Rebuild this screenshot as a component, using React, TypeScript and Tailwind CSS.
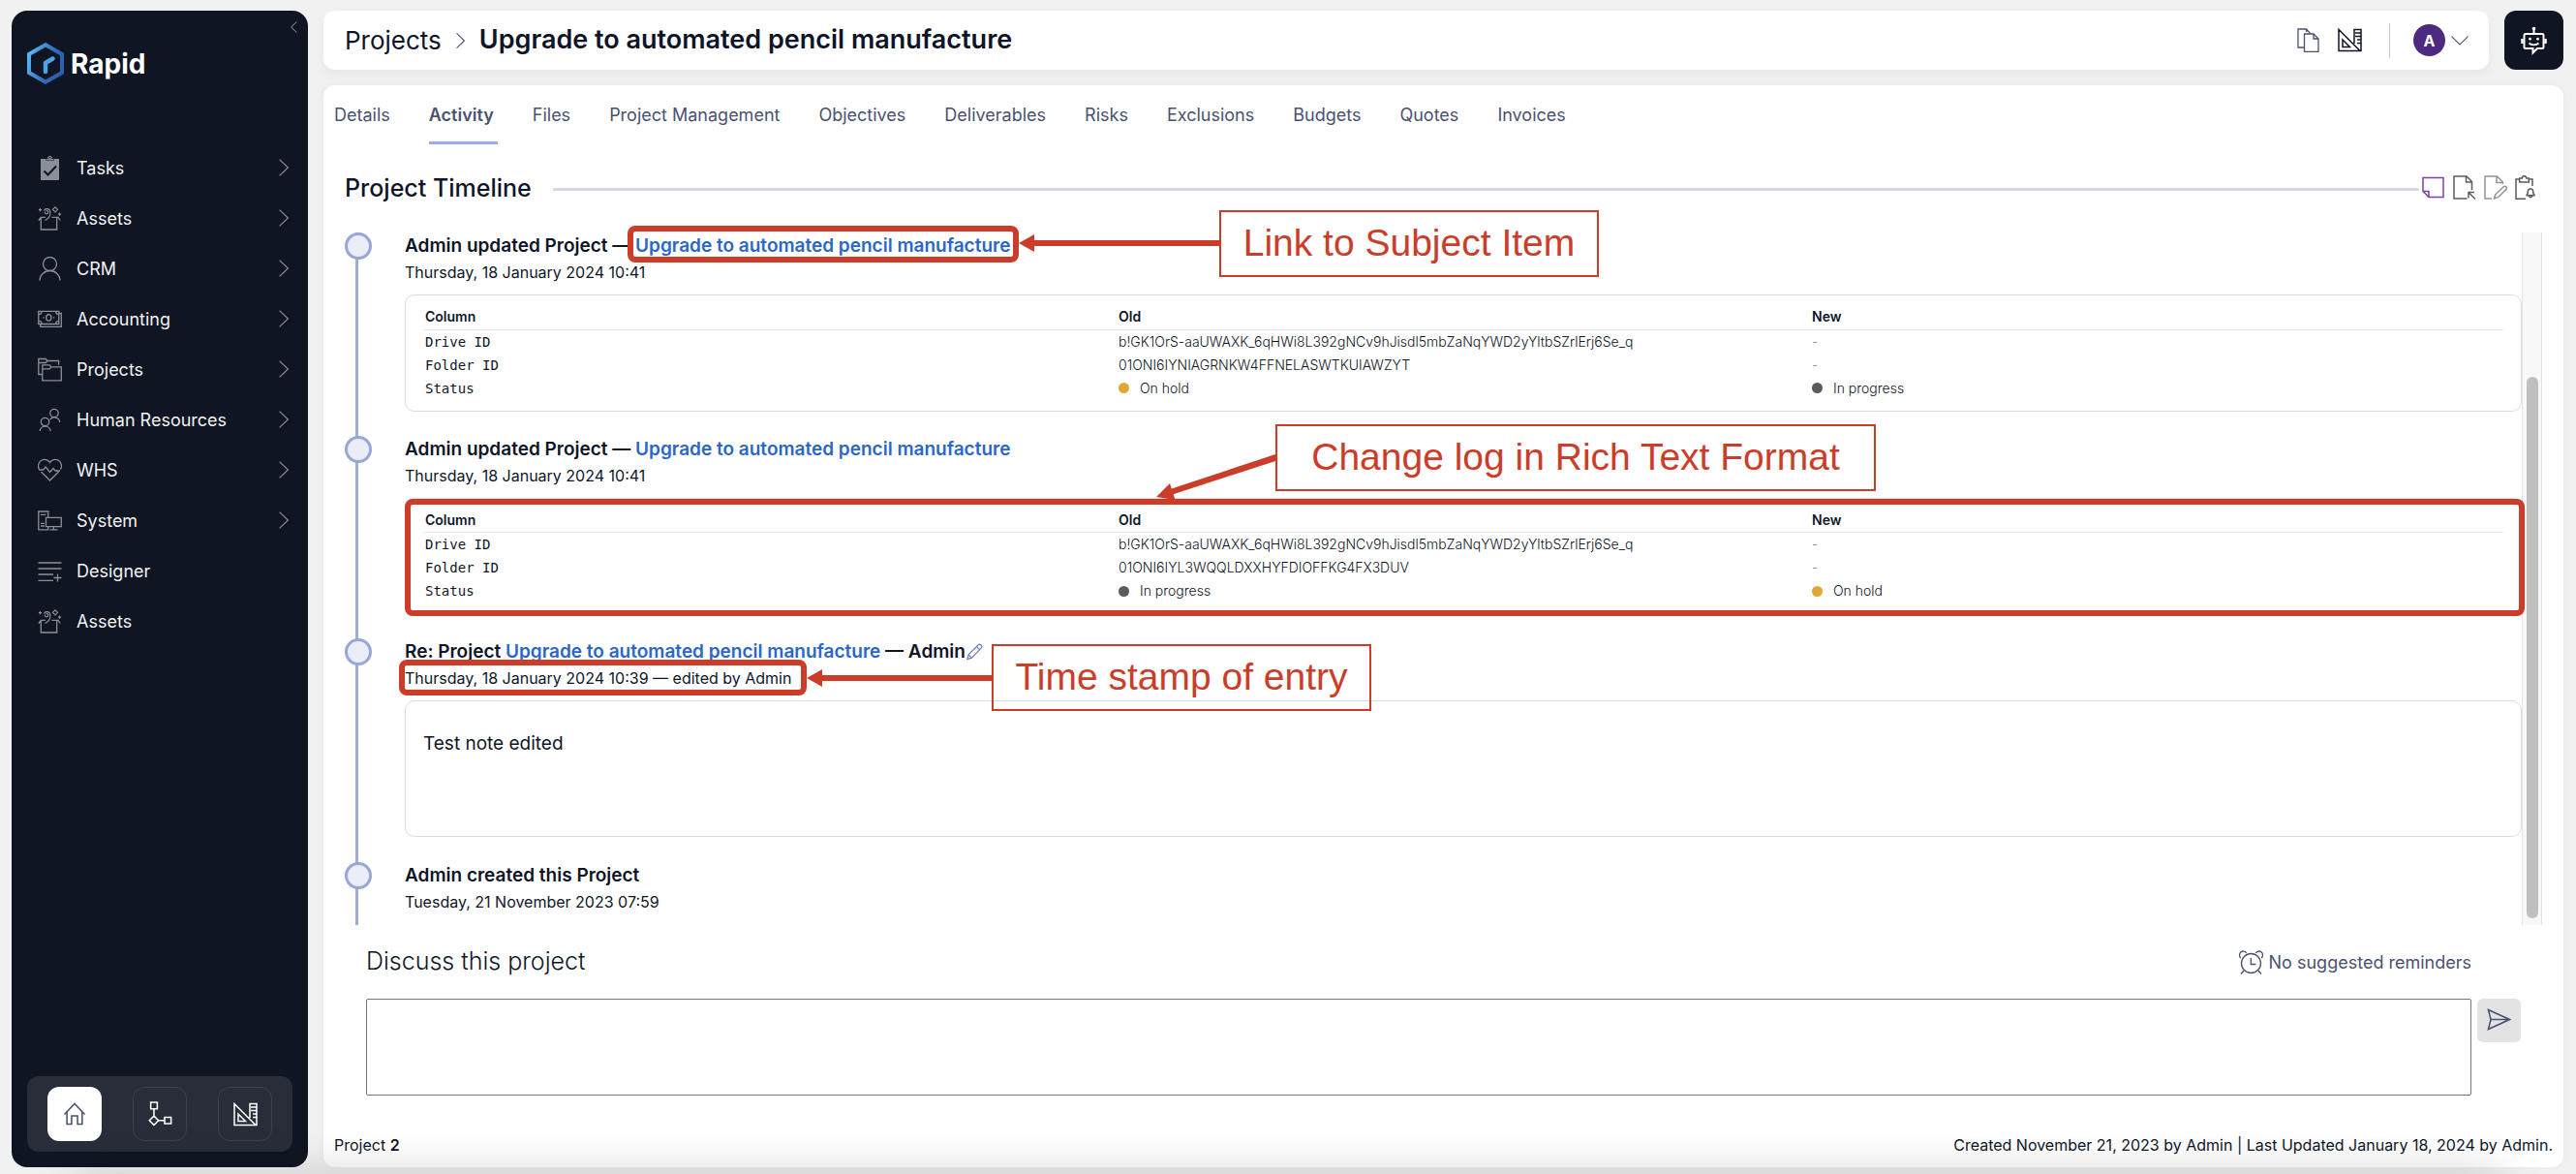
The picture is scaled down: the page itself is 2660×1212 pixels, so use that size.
import type { ReactNode } from 'react';

type IconProps = { className?: string; children?: ReactNode; size?: number };

function Icon({ className = '', children, size = 25 }: IconProps) {
  return (
    <svg
      width={size}
      height={size}
      viewBox="0 0 25 25"
      fill="none"
      stroke="currentColor"
      strokeWidth="1.3"
      className={`shrink-0 ${className}`}
      aria-hidden="true"
    >
      {children}
    </svg>
  );
}

const TasksIcon = () => (
  <Icon>
    <path d="M3 3h5.5v2h8V3H22v22H3z" fill="currentColor" stroke="none" />
    <path d="M9 4.5V3h2a1.6 1.6 0 0 1 3 0h2v1.5z" fill="currentColor" stroke="none" />
    <path d="M10.5 2.6a2 2 0 0 1 4 0" strokeWidth="1.2" />
    <path d="M6.5 15.5l4 4 8.5-9" stroke="#0f1522" strokeWidth="2" />
  </Icon>
);
const AssetsIcon = () => (
  <Icon>
    <path d="M3.3 12v12h16.4V12M1 14.5l2.3-3.2h4.5M23.2 14.5L21 11.3h-6.5" />
    <path d="M6.5 4.5c1-3 6.500-2.600 6.500 1.800 0 4-1.500 6.500-5.500 8.200M7.300 5.500c-.5 3 3.800 3 3.500.2-.1-1.600-1.900-1.500-2-.3" strokeWidth="1.200" />
    <path d="M18 .8l2.500 2.500L18 5.800l-2.500-2.500zM2.500 2v3.200M.9 3.600h3.200M22.500 6.500v3.200M20.900 8.100h3.200" strokeWidth="1.200" />
  </Icon>
);
const PersonIcon = () => (
  <Icon>
    <circle cx="12.500" cy="7.500" r="7" />
    <path d="M2 24.500a10.500 10 0 0 1 21 0" />
  </Icon>
);
const MoneyIcon = () => (
  <Icon>
    <path d="M.8 4.300h21v13.200H.8z" />
    <path d="M22 6.500h2.300v13.800H2.800V17.600" />
    <ellipse cx="11.300" cy="10.900" rx="2.600" ry="3.200" />
    <path d="M1 7.500c2 0 3-1 3-3M21.600 7.500c-2 0-3-1-3-3M1 14.300c2 0 3 1 3 3M21.600 14.300c-2 0-3 1-3 3M5.300 10.900h1.500M15.800 10.900h1.500" />
  </Icon>
);
const FoldersIcon = () => (
  <Icon>
    <path d="M4.500 17.500H.8V1.500h7.500l1.500 2h11.800v4.300M1 5.500h7.300l1.500-2" />
    <path d="M4.800 7.800h7.500l1.500 2h10.500v14H4.800zM5 11.800h7.300l1.500-2" />
  </Icon>
);
const PeopleIcon = () => (
  <Icon>
    <circle cx="17" cy="5.500" r="4.200" />
    <circle cx="7.500" cy="14.500" r="4.200" />
    <path d="M2 24a5.700 5.700 0 0 1 11.300 0M12.500 12.300a5.700 5.700 0 0 1 10.300 2.700" />
  </Icon>
);
const HeartIcon = () => (
  <Icon>
    <path d="M1.500 11.500A6.500 6.500 0 0 1 12.500 4.500a6.500 6.500 0 0 1 11 7" />
    <path d="M1 12h4.500l2.700-3 4.300 5.500 3.600-4 2 2.500H23M3.500 14l9 9 9-9" />
  </Icon>
);
const SystemIcon = () => (
  <Icon>
    <path d="M10.800 9V3H.8v18.800h10V19M3 6.300h5.500M3 15.300h4M3 18h4" />
    <path d="M8.500 9.300h15.800v9.400H8.500zM16.400 18.700v3M12.500 21.900h8" />
  </Icon>
);
const DesignerIcon = () => (
  <Icon>
    <path d="M.5 4h24M.5 10h24M.5 16h15.500M.5 22.300h15.500M20.500 15.500v8M16.500 19.500h8" />
  </Icon>
);
const HomeIcon = () => (
  <Icon size={24}>
    <path d="M1.500 13L12.500 1.500 23.500 13M4.300 10.500v13h5v-9h6.400v9h5v-13" strokeWidth="1.600" />
  </Icon>
);
const FlowIcon = () => (
  <Icon size={26}>
    <path d="M3.500 1h6.500v6.500H3.500zM6.700 7.500v7M6.700 14.500l4.500 4.500-4.500 4.500L2.200 19zM11.200 19h6M17.300 15.800h6.400v6.400h-6.400z" strokeWidth="1.500" />
  </Icon>
);
const RulerIcon = () => (
  <Icon>
    <path d="M1 1.500v22h22zM5 12v7.500h7.500zM17 16V1.500h7v22h-2M20 5h4M20 8.500h4M20 12h4M20 15.500h4M18 5h2M18 8.500h2" strokeWidth="1.500" />
  </Icon>
);
const CopyIcon = () => (
  <Icon>
    <path d="M8 20H2V1h8.500l4 4.500M10.500 1v3" />
    <path d="M8.500 6H18l5 5v13.500H8.500zM18 6v5h5" />
  </Icon>
);
const BotIcon = () => (
  <svg width="27" height="30" viewBox="0 0 27 30" fill="none" stroke="white" strokeWidth="2" aria-hidden="true">
    <circle cx="13.500" cy="2.500" r="1.800" fill="white" stroke="none" />
    <path d="M13.500 3v5M5 8h17a1.500 1.500 0 0 1 1.500 1.500v12A1.500 1.500 0 0 1 22 23h-5l-4.500 4.500V23H5a1.500 1.500 0 0 1-1.500-1.500v-12A1.500 1.500 0 0 1 5 8z" />
    <path d="M1.500 13v5M25.500 13v5" strokeWidth="2.500" />
    <path d="M8.500 17.500c2.500 2.500 7.500 2.500 10 0" strokeWidth="1.800" />
    <circle cx="9.500" cy="13.200" r="1.400" fill="white" stroke="none" />
    <circle cx="17.500" cy="13.200" r="1.400" fill="white" stroke="none" />
  </svg>
);
const NoteIcon = () => (
  <Icon className="text-[#7c3fa8]">
    <path d="M2 2.500h21v20H8L2 16.500zM2 16.500h6v6" strokeWidth="1.500" />
  </Icon>
);
const FileArrowIcon = () => (
  <Icon className="text-[#5c5c5c]">
    <path d="M15.500 24H2V1h13l5.500 5.500V15M14.500 1v6h6M17 23.500v-6h6M17.500 18l6.500 6.500" strokeWidth="1.500" />
  </Icon>
);
const FileEditIcon = () => (
  <Icon className="text-[#949494]">
    <path d="M9 24H2V1h12.500l6 6v2M14 1v6.500h6.500" strokeWidth="1.500" />
    <path d="M11.500 24l1.200-4.200 8.500-8a1.900 1.900 0 0 1 2.600 2.800l-8.300 8.100z" strokeWidth="1.500" />
  </Icon>
);
const ClipboardBellIcon = () => (
  <Icon className="text-[#5c5c5c]">
    <path d="M12 24.200H2V4h3.500M15.500 4H19v7M5.700 3h2.500a2.300 2.300 0 0 1 4.600 0h2.500v4H5.700z" strokeWidth="1.500" />
    <path d="M12.500 20.800c1.500-.6 1.800-1.500 1.800-4a2.700 2.700 0 0 1 5.400 0c0 2.500.3 3.400 2 4zM15.500 21.500a1.700 1.700 0 0 0 3.200 0" strokeWidth="1.500" />
  </Icon>
);
const PencilIcon = () => (
  <Icon size={18} className="text-[#6c7cc0]">
    <path d="M2.500 23l1.800-6.500L18 2.800a3 3 0 0 1 4.400 4.300L8.800 21zM4.300 16.500L8.800 21M16 5l4.300 4.300" strokeWidth="1.600" />
  </Icon>
);
const AlarmIcon = () => (
  <Icon>
    <circle cx="12.500" cy="13.500" r="10" />
    <path d="M1.800 8a4 4 0 1 1 6-5.200M23.200 8a4 4 0 1 0-6-5.200M12.300 8v6.500h5M5 21l-3 3.500M20 21l3 3.500" />
  </Icon>
);
const SendIcon = () => (
  <Icon>
    <path d="M1.500 2.500l22 10-22 10 2.500-10zM4 12.500h19" strokeWidth="1.600" />
  </Icon>
);

function Chevron({ className = '' }: { className?: string }) {
  return (
    <svg viewBox="0 0 10 18" fill="none" stroke="currentColor" strokeWidth="1.200" className={`shrink-0 ${className}`} aria-hidden="true">
      <path d="M.6.6L9.400 9 .6 17.400" />
    </svg>
  );
}

const navItems = [
  { label: 'Tasks', icon: <TasksIcon />, expands: true },
  { label: 'Assets', icon: <AssetsIcon />, expands: true },
  { label: 'CRM', icon: <PersonIcon />, expands: true },
  { label: 'Accounting', icon: <MoneyIcon />, expands: true },
  { label: 'Projects', icon: <FoldersIcon />, expands: true },
  { label: 'Human Resources', icon: <PeopleIcon />, expands: true },
  { label: 'WHS', icon: <HeartIcon />, expands: true },
  { label: 'System', icon: <SystemIcon />, expands: true },
  { label: 'Designer', icon: <DesignerIcon />, expands: false },
  { label: 'Assets', icon: <AssetsIcon />, expands: false },
];

function Sidebar() {
  return (
    <aside className="flex w-[306px] shrink-0 flex-col rounded-2xl bg-[#0f1522] text-white">
      <div className="flex h-[33px] items-end justify-end px-[11px] pb-[10px]">
        <button aria-label="Collapse menu" className="text-[#c5c7cc]">
          <Chevron className="h-3 w-[7px] rotate-180" />
        </button>
      </div>
      <a href="#home" className="flex h-[43px] items-center gap-[7px] pl-4">
        <svg width="38" height="43" viewBox="0 0 38 43" fill="none" aria-hidden="true">
          <defs>
            <linearGradient id="logo" x1="0" y1="0.300" x2="1" y2="0.700">
              <stop offset="0" stopColor="#56b4ec" />
              <stop offset="0.600" stopColor="#2d6fc0" />
              <stop offset="1" stopColor="#2a5fae" />
            </linearGradient>
          </defs>
          <path d="M19 2.300L36 12v19L19 40.700 2 31V12z" stroke="url(#logo)" strokeWidth="4" />
          <path d="M19 30v-9l7.500-4.500" stroke="#4aa5e6" strokeWidth="4.500" strokeLinecap="round" strokeLinejoin="round" />
        </svg>
        <span className="text-[28px] font-bold">Rapid</span>
      </a>
      <nav className="mt-[60px] flex flex-col">
        {navItems.map((item, i) => (
          <a key={i} href={`#nav-${i}`} className="flex h-[52px] items-center pr-[20px] pl-[27px] text-[#8b8e97]">
            {item.icon}
            <span className="ml-[15px] flex-1 text-[18px] text-[#f1f2f4]">{item.label}</span>
            {item.expands && <Chevron className="h-[18px] w-[10px]" />}
          </a>
        ))}
      </nav>
      <div className="mx-4 mt-auto mb-4 flex h-[78px] items-center justify-center gap-8 rounded-xl bg-[#282d39]">
        <button aria-label="Home" className="flex size-14 items-center justify-center rounded-xl bg-white text-[#4a5270]">
          <HomeIcon />
        </button>
        <button aria-label="Workflow" className="flex size-14 items-center justify-center rounded-xl border border-[#3d424e]">
          <FlowIcon />
        </button>
        <button aria-label="Design" className="flex size-14 items-center justify-center rounded-xl border border-[#3d424e]">
          <RulerIcon />
        </button>
      </div>
    </aside>
  );
}

function Header() {
  return (
    <div className="flex gap-4">
      <header className="flex h-[61px] flex-1 items-center rounded-xl bg-white pr-[21px] pl-[22px] shadow-[0_4px_12px_rgba(0,0,0,0.05)]">
        <a href="#projects" className="text-[26px]">Projects</a>
        <Chevron className="mx-[15px] h-[18px] w-[9px] text-[#4a5270]" />
        <h1 className="flex-1 text-[27px] font-semibold">Upgrade to automated pencil manufacture</h1>
        <button aria-label="Copy" className="mr-[18px] text-[#4a5270]"><CopyIcon /></button>
        <button aria-label="Design"><RulerIcon /></button>
        <span className="mr-6 ml-7 h-9 w-px bg-[#c4c6cc]" />
        <button aria-label="Account" className="flex items-center gap-1.5">
          <span className="flex size-[33px] items-center justify-center rounded-full bg-[#4b2a80] text-[16px] font-bold text-white">A</span>
          <svg width="18" height="10" viewBox="0 0 18 10" fill="none" stroke="#4a5270" strokeWidth="1.200" aria-hidden="true">
            <path d="M.6.6L9 9 17.400.6" />
          </svg>
        </button>
      </header>
      <button aria-label="Assistant" className="flex size-[61px] items-center justify-center rounded-xl bg-[#0f1522]">
        <BotIcon />
      </button>
    </div>
  );
}

const tabs = ['Details', 'Activity', 'Files', 'Project Management', 'Objectives', 'Deliverables', 'Risks', 'Exclusions', 'Budgets', 'Quotes', 'Invoices'];

function Tabs() {
  return (
    <nav className="flex gap-[36px] px-[11px] pt-[17px] text-[18px] leading-7 text-[#4a5270]">
      {tabs.map((tab) => (
        <a
          key={tab}
          href={`#${tab}`}
          className={tab === 'Activity' ? 'border-b-3 border-[#9dacdb] pr-1 pb-[13px] font-semibold' : 'border-b-3 border-transparent pr-1 pb-[13px]'}
        >
          {tab}
        </a>
      ))}
    </nav>
  );
}

function Status({ value }: { value: string }) {
  if (value === '-') return <span className="text-[#8b8e97]">-</span>;
  return (
    <span className="flex items-center gap-[11px]">
      <span className={value === 'On hold' ? 'size-[11px] rounded-full bg-[#e0a832]' : 'size-[11px] rounded-full bg-[#5c5c5c]'} />
      {value}
    </span>
  );
}

function ChangeLog({ rows }: { rows: string[][] }) {
  return (
    <div className="mt-[10px] rounded-[10px] border border-[#d5dcf0] px-[18px] pt-[10px] pb-[11px]">
      <table className="w-full table-fixed border-collapse text-left text-[14px]">
        <thead>
          <tr className="h-[25px] border-b border-[#e0e6f2]">
            {['Column', 'Old', 'New'].map((h) => (
              <th key={h} className="p-0 pl-0.5 leading-6 font-semibold">{h}</th>
            ))}
          </tr>
        </thead>
        <tbody>
          {rows.map(([name, before, after]) => (
            <tr key={name} className="h-6">
              <td className="p-0 pl-0.5 font-['DejaVu_Sans_Mono',monospace] leading-6">{name}</td>
              <td className="p-0 pl-0.5 leading-6 font-light">{name === 'Status' ? <Status value={before} /> : before}</td>
              <td className="p-0 pl-0.5 leading-6 font-light"><Status value={after} /></td>
            </tr>
          ))}
        </tbody>
      </table>
    </div>
  );
}

function Entry({ title, date, children, className }: { title: ReactNode; date: string; children?: ReactNode; className: string }) {
  return (
    <li className="flex">
      <div className="relative w-[62px] shrink-0">
        <span className="absolute inset-y-0 left-[11px] w-[3px] bg-[#9dacdb]" />
        <span className="absolute top-0 left-0 size-7 rounded-full border-3 border-[#98a6d8] bg-[#ebeef9]" />
      </div>
      <div className={`relative min-w-0 flex-1 ${className}`}>
        <h3 className="flex items-center text-[19px] leading-7 font-semibold whitespace-pre">{title}</h3>
        <p className="text-[16px] leading-[26px]">{date}</p>
        {children}
      </div>
    </li>
  );
}

const SubjectLink = () => (
  <a href="#subject" className="text-[#2b66c9]">Upgrade to automated pencil manufacture</a>
);

function Highlight({ className }: { className: string }) {
  return <span className={`pointer-events-none absolute rounded-lg border-6 border-[#cb3d29] ${className}`} />;
}

function Callout({ className, children }: { className: string; children: string }) {
  return (
    <span className={`absolute flex h-[69px] items-center justify-center border-2 border-[#cb3d29] font-['Liberation_Sans',Arial,sans-serif] text-[39px] whitespace-nowrap text-[#cb3d29] ${className}`}>
      {children}
    </span>
  );
}

function StraightArrow({ length, className }: { length: number; className: string }) {
  return (
    <svg width={length} height="18" viewBox={`0 0 ${length} 18`} fill="#cb3d29" className={`absolute ${className}`} aria-hidden="true">
      <path d={`M0 9L16 0v6H${length}v6H16v6z`} />
    </svg>
  );
}

function Timeline() {
  return (
    <div className="mt-[27px] flex px-[22px]">
      <ol className="min-w-0 flex-1">
        <Entry title={<>Admin updated Project — <SubjectLink /></>} date="Thursday, 18 January 2024 10:41" className="pb-[25px]">
          <ChangeLog
            rows={[
              ['Drive ID', 'b!GK1OrS-aaUWAXK_6qHWi8L392gNCv9hJisdl5mbZaNqYWD2yYltbSZrlErj6Se_q', '-'],
              ['Folder ID', '01ONI6IYNIAGRNKW4FFNELASWTKUIAWZYT', '-'],
              ['Status', 'On hold', 'In progress'],
            ]}
          />
          <Highlight className="-top-[7px] left-[230px] h-[38px] w-[404px]" />
          <StraightArrow length={207} className="top-[2px] left-[634px]" />
          <Callout className="-top-[23px] left-[841px] w-[392px]">Link to Subject Item</Callout>
        </Entry>
        <Entry title={<>Admin updated Project — <SubjectLink /></>} date="Thursday, 18 January 2024 10:41" className="pb-[25px]">
          <ChangeLog
            rows={[
              ['Drive ID', 'b!GK1OrS-aaUWAXK_6qHWi8L392gNCv9hJisdl5mbZaNqYWD2yYltbSZrlErj6Se_q', '-'],
              ['Folder ID', '01ONI6IYL3WQQLDXXHYFDIOFFKG4FX3DUV', '-'],
              ['Status', 'In progress', 'On hold'],
            ]}
          />
          <Highlight className="top-[65px] -right-[3px] left-0 h-[121px]" />
          <svg width="123" height="48" viewBox="0 0 123 48" fill="#cb3d29" className="absolute top-[18px] left-[776px]" aria-hidden="true">
            <path d="M0 45L14 31l1.800 5.600L123 1v7L17.600 42.200 19.500 48z" />
          </svg>
          <Callout className="-top-[12px] left-[899px] w-[620px]">Change log in Rich Text Format</Callout>
        </Entry>
        <Entry
          title={
            <>
              Re: Project <SubjectLink /> — Admin
              <button aria-label="Edit note"><PencilIcon /></button>
            </>
          }
          date="Thursday, 18 January 2024 10:39 — edited by Admin"
          className="pb-[26px]"
        >
          <div className="mt-[10px] h-[141px] rounded-[10px] border border-[#d5dcf0] px-[18px] pt-[30px] text-[19px] leading-7">Test note edited</div>
          <Highlight className="top-[22px] -left-[6px] h-[37px] w-[421px]" />
          <StraightArrow length={191} className="top-[32px] left-[415px]" />
          <Callout className="top-[6px] left-[606px] w-[392px]">Time stamp of entry</Callout>
        </Entry>
        <Entry title="Admin created this Project" date="Tuesday, 21 November 2023 07:59" className="pb-[11px]" />
      </ol>
      <div className="flex w-[21px] shrink-0 flex-col items-center justify-end border-x border-[#e4e4e4] bg-[#f8f8f8] pb-[7px]">
        <span className="h-[79%] w-3 rounded-full bg-[#bfbfbf]" />
      </div>
    </div>
  );
}

export default function App() {
  return (
    <div className="relative flex min-h-screen gap-4 overflow-hidden bg-[#f1f1f1] pt-[11px] pr-[13px] pb-[7px] pl-3 font-[Inter,sans-serif] text-[#0f1528]">
      <Sidebar />
      <div className="flex min-w-0 flex-1 flex-col gap-4">
        <Header />
        <main className="flex flex-1 flex-col rounded-xl bg-white shadow-[0_0_8px_rgba(0,0,0,0.04)]">
          <Tabs />
          <div className="mt-7 flex h-9 items-center pr-[26px] pl-[22px]">
            <h2 className="text-[25px] font-medium">Project Timeline</h2>
            <span className="mr-[2px] ml-[22px] h-[3px] flex-1 rounded-full bg-[#d6d8e1]" />
            <div className="flex gap-[7px] pb-1">
              <button aria-label="Add note"><NoteIcon /></button>
              <button aria-label="Open file"><FileArrowIcon /></button>
              <button aria-label="Edit file"><FileEditIcon /></button>
              <button aria-label="Add reminder"><ClipboardBellIcon /></button>
            </div>
          </div>
          <Timeline />
          <section className="mt-5 px-[44px]">
            <div className="flex h-9 items-center justify-between pr-[51px]">
              <label htmlFor="comment" className="text-[25px] font-light">Discuss this project</label>
              <p className="flex items-center gap-1.5 text-[18px] text-[#4a5270]">
                <AlarmIcon />
                No suggested reminders
              </p>
            </div>
            <div className="mt-5 flex items-start gap-1.5">
              <textarea id="comment" className="block h-[100px] flex-1 resize-none rounded-xs border border-[#767676]" />
              <button aria-label="Send" className="flex size-[45px] items-center justify-center rounded-md bg-[#e3e3e3] pb-0.5 text-[#4a5270]">
                <SendIcon />
              </button>
            </div>
          </section>
          <footer className="mt-auto flex justify-between px-[11px] pb-[11px] text-[16px] leading-6">
            <p>Project <b className="font-semibold">2</b></p>
            <p>Created November 21, 2023 by Admin | Last Updated January 18, 2024 by Admin.</p>
          </footer>
        </main>
      </div>
      <div className="pointer-events-none absolute inset-x-20 top-full h-24 shadow-[0_0_48px_rgba(0,0,0,0.18)]" />
    </div>
  );
}
